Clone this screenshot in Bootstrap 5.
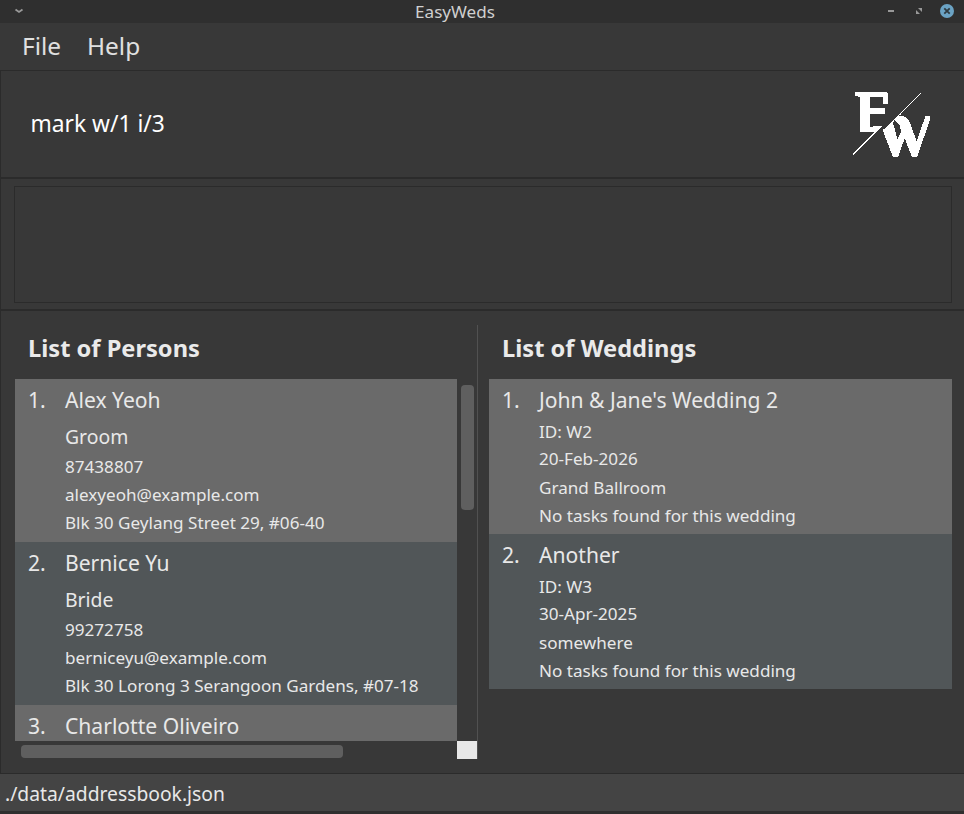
<!DOCTYPE html>
<html lang="en" data-bs-theme="dark">
<head>
<meta charset="utf-8">
<title>EasyWeds</title>
<meta name="viewport" content="width=device-width, initial-scale=1">
<link href="https://cdn.jsdelivr.net/npm/bootstrap@5.3.0/dist/css/bootstrap.min.css" rel="stylesheet">
<style>
body{font-family:"Noto Sans",sans-serif;background:#383838;color:#e8e8e8;height:814px;overflow:hidden;white-space:nowrap}
.titlebar{height:23px;background:#2f2f2f;color:#d0d0d0;font-size:17.1px;line-height:24px;padding:0 9px 0 14px}
.titlebar .side{width:74px;height:22px}
.titlebar .caption{margin-right:63px}
.menubar{height:47px;padding-left:22px;gap:26px;font-size:24.4px;line-height:46px;color:#e0e0e0}
.menubar .nav-link{color:inherit;padding:0}
.pane{border-left:1px solid #2b2b2b;border-top:1px solid #2b2b2b}
.command-pane{height:107px;padding:2px 32px 0 29.5px}
.command-pane .form-control{font-size:22.8px;color:#fff;line-height:34px;height:34px;padding:0;margin-bottom:2px;background:transparent;border:0;box-shadow:none}
.result-pane{height:132px;border-top:2px solid #2b2b2b;padding:7px 12px 6px 13px}
.result-box{border:1px solid #2b2b2b}
.lists-pane{height:464px;border-top:2px solid #2b2b2b;padding:14px 12px 14px 14px}
.persons{width:463px;height:434px;border-right:1px solid #515151}
.weddings{margin-left:11px}
.list-title{font-size:23.65px;font-weight:700;line-height:32px;height:54px;padding:7px 0 0 13px;margin:0;color:#eaeaea}
.viewport{width:442px;height:362px}
.entry{padding:4px 13px 0;background:#6a6a6a}
.entry:nth-child(even){background:#515658}
.persons .entry{height:163px}
.weddings .entry{height:155px}
.entry .num{width:37px;font-size:21.1px;line-height:34px}
.entry .title{font-size:21.1px;line-height:34px}
.entry .role{font-size:19.4px;line-height:31px;margin-top:4px}
.entry .detail{font-size:17.1px;line-height:30px;height:28px}
.entry .ident{height:27px}
.entry .date{height:29px}
.vtrack{width:20px;padding:6px 3px 0 4px}
.vthumb{width:13px;height:125px;border-radius:4px;background:#5f5f5f}
.htrack{width:442px;height:18px;padding:4px 0 0 6px}
.hthumb{width:322px;height:13px;border-radius:4px;background:#5f5f5f}
.corner{width:20px;height:18px;background:#e8e8e8}
.statusbar{height:41px;background:#444;border-top:1px solid #2b2b2b;border-bottom:3px solid #2f2f2f;padding-left:5px;font-size:19.3px;line-height:40px}
</style>
<script src="https://cdn.jsdelivr.net/npm/bootstrap@5.3.0/dist/js/bootstrap.bundle.min.js"></script>
</head>
<body class="d-flex flex-column">
<header class="titlebar d-flex">
  <div class="side"><svg class="d-block" width="10" height="22"><path d="M1.5 9.5 5 12 8.500 9.500" fill="none" stroke="#999" stroke-width="1.800"/></svg></div>
  <div class="caption flex-grow-1 text-center ps-1">EasyWeds</div>
  <div class="side"><svg class="d-block" width="74" height="22">
    <rect x="7" y="10" width="6" height="2" fill="#999"/>
    <path d="M37 8h4v4zM35 10v4h4z" fill="#999"/>
    <circle cx="66" cy="11" r="7" fill="#6ba3c4"/>
    <path d="M63.300 8.300l5.400 5.400M68.700 8.300l-5.400 5.400" stroke="#2f3a40" stroke-width="1.800"/>
  </svg></div>
</header>
<nav class="menubar nav"><a class="nav-link">File</a><a class="nav-link">Help</a></nav>
<section class="pane command-pane d-flex align-items-center">
  <input class="form-control flex-grow-1" value="mark w/1 i/3" aria-label="Command">
  <svg class="flex-shrink-0" width="80" height="70" viewBox="36 30 240 210" shape-rendering="crispEdges" fill="#fff">
    <path d="M45 36H138L144 42V72H129V54L126 51H90V84H135V102H90V141L108 138H126L42 224H39V219L105 156H60V51L45 48z"/>
    <path d="M129 152 180 103 242 40" fill="none" stroke="#fff" stroke-width="3"/>
    <path d="M129 153 176 107 192 109 204 117 210 129 230 183 256 109H270V120L231 231H216L194 175 174 231H159zM163 121 159 128 172 178 183 156 180 138 171 126z" fill-rule="evenodd"/>
  </svg>
</section>
<section class="pane result-pane"><div class="result-box h-100"></div></section>
<main class="pane lists-pane d-flex">
  <section class="persons flex-shrink-0">
    <h2 class="list-title">List of Persons</h2>
    <div class="d-flex">
      <div class="viewport overflow-hidden">
        <div class="entry d-flex"><div class="num">1.</div><div>
          <div class="title">Alex Yeoh</div><div class="role">Groom</div><div class="detail">87438807</div><div class="detail">alexyeoh@example.com</div><div class="detail">Blk 30 Geylang Street 29, #06-40</div></div></div>
        <div class="entry d-flex"><div class="num">2.</div><div>
          <div class="title">Bernice Yu</div><div class="role">Bride</div><div class="detail">99272758</div><div class="detail">berniceyu@example.com</div><div class="detail">Blk 30 Lorong 3 Serangoon Gardens, #07-18</div></div></div>
        <div class="entry d-flex"><div class="num">3.</div><div><div class="title">Charlotte Oliveiro</div></div></div>
      </div>
      <div class="vtrack"><div class="vthumb"></div></div>
    </div>
    <div class="d-flex"><div class="htrack"><div class="hthumb"></div></div><div class="corner"></div></div>
  </section>
  <section class="weddings flex-grow-1">
    <h2 class="list-title">List of Weddings</h2>
    <div class="entry-list">
      <div class="entry d-flex"><div class="num">1.</div><div>
        <div class="title">John &amp; Jane's Wedding 2</div><div class="detail ident">ID: W2</div><div class="detail date">20-Feb-2026</div><div class="detail">Grand Ballroom</div><div class="detail">No tasks found for this wedding</div></div></div>
      <div class="entry d-flex"><div class="num">2.</div><div>
        <div class="title">Another</div><div class="detail ident">ID: W3</div><div class="detail date">30-Apr-2025</div><div class="detail">somewhere</div><div class="detail">No tasks found for this wedding</div></div></div>
    </div>
  </section>
</main>
<footer class="statusbar">./data/addressbook.json</footer>
</body>
</html>
